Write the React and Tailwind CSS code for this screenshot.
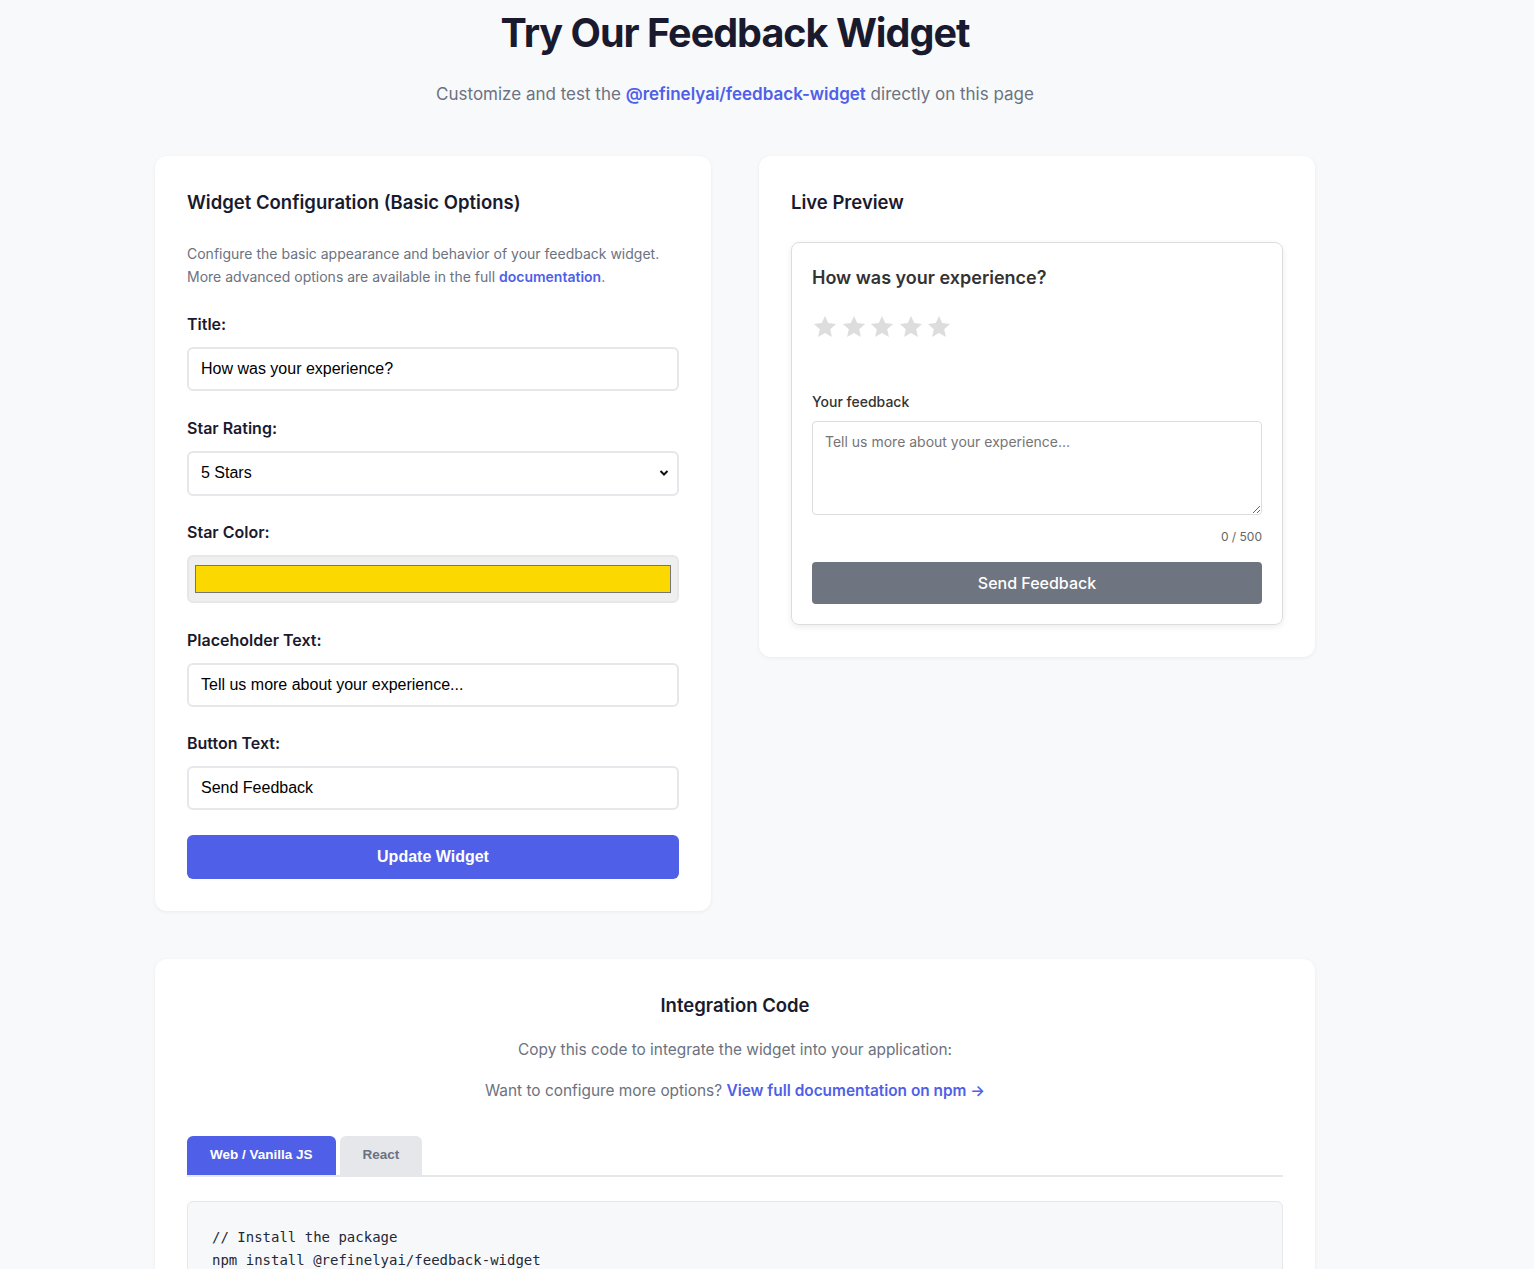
import { useState } from 'react'

const inter = { fontFamily: 'Inter, "Noto Sans", sans-serif' }

function Field({ label, children }) {
  return (
    <div className="mb-[24.5px]">
      <label className="block text-base leading-6 font-semibold text-[#1a1a2e] mb-[11px]">{label}</label>
      {children}
    </div>
  )
}

const inputCls =
  "w-full h-[44px] border-2 border-[#e5e7eb] rounded-md px-3 text-base text-black bg-white outline-none font-['Liberation_Sans',Arial,sans-serif]"

const tabCls = 'h-[39px] px-[23px] rounded-t-md text-[13.5px] font-bold '

function Star() {
  return (
    <svg width="26" height="26" viewBox="0 0 24 24" className="fill-[#dddddd]">
      <path d="M12 1.8l3 6.6 7.2.8-5.4 4.9 1.55 7.1L12 17.5l-6.35 3.7 1.55-7.1-5.4-4.9 7.2-.8z" />
    </svg>
  )
}

export default function App() {
  const [form, setForm] = useState({
    title: 'How was your experience?',
    stars: '5 Stars',
    placeholder: 'Tell us more about your experience...',
    button: 'Send Feedback',
  })
  const [tab, setTab] = useState('web')
  const [text, setText] = useState('')

  return (
    <div className="min-h-screen bg-[#f8f9fb]" style={inter}>
      <div className="w-[1470px] pb-16">
        <div className="max-w-[1160px] mx-auto">
          <header className="text-center pt-[13px]">
            <h1 className="text-[39.5px] leading-10 font-bold tracking-tight text-[#1a1a2e]">Try Our Feedback Widget</h1>
            <p className="mt-[27px] text-[17px] leading-7 text-[#6b7280]">
              Customize and test the{' '}
              <a href="#" className="font-semibold text-[#4f5fe8]">@refinelyai/feedback-widget</a>{' '}
              directly on this page
            </p>
          </header>

          <div className="mt-[48px] grid grid-cols-2 gap-12 items-start">
            <section className="bg-white rounded-xl shadow-[0_1px_4px_rgba(0,0,0,0.06)] p-8">
              <h2 className="text-[18.5px] leading-7 font-semibold text-[#1a1a2e] mb-[26px]">Widget Configuration (Basic Options)</h2>
              <p className="text-sm leading-[23px] text-[#6b7280] mb-6">
                Configure the basic appearance and behavior of your feedback widget.
                <br />
                More advanced options are available in the full{' '}
                <a href="#" className="font-semibold text-[#4f5fe8]">documentation</a>.
              </p>
              <Field label="Title:">
                <input className={inputCls} value={form.title} onChange={e => setForm(f => ({ ...f, title: e.target.value }))} />
              </Field>
              <Field label="Star Rating:">
                <div className="relative">
                  <select
                    className={inputCls + ' appearance-none h-[45px]'}
                    value={form.stars}
                    onChange={e => setForm(f => ({ ...f, stars: e.target.value }))}
                  >
                    <option>3 Stars</option>
                    <option>4 Stars</option>
                    <option>5 Stars</option>
                  </select>
                  <svg className="absolute right-[10px] top-[18px] pointer-events-none" width="10" height="8" viewBox="0 0 10 8">
                    <path d="M1.5 2l3.5 3.5L8.5 2" fill="none" stroke="#111" strokeWidth="2" />
                  </svg>
                </div>
              </Field>
              <Field label="Star Color:">
                <div className="h-12 border-2 border-[#e5e7eb] rounded-md bg-[#efefef] px-[6px] py-2">
                  <div className="h-full bg-[#fbd900] border border-[#767676]" />
                </div>
              </Field>
              <Field label="Placeholder Text:">
                <input className={inputCls} value={form.placeholder} onChange={e => setForm(f => ({ ...f, placeholder: e.target.value }))} />
              </Field>
              <Field label="Button Text:">
                <input className={inputCls} value={form.button} onChange={e => setForm(f => ({ ...f, button: e.target.value }))} />
              </Field>
              <button className="w-full h-11 rounded-md bg-[#4f5fe8] text-white text-base font-bold font-['Liberation_Sans',Arial,sans-serif]">
                Update Widget
              </button>
            </section>

            <section className="bg-white rounded-xl shadow-[0_1px_4px_rgba(0,0,0,0.06)] p-8">
              <h2 className="text-[18.5px] leading-7 font-semibold text-[#1a1a2e] mb-[26px]">Live Preview</h2>
              <div className="border border-[#dddddd] rounded-lg shadow-[0_2px_6px_rgba(0,0,0,0.08)] p-5">
                <h3 className="text-lg leading-[30px] font-semibold text-[#333333]">{form.title}</h3>
                <div className="flex gap-[2.5px] mt-[21px] mb-[52px]">
                  {[0, 1, 2, 3, 4].map(i => <Star key={i} />)}
                </div>
                <label className="block text-sm leading-5 font-medium text-[#333333] mb-[9px]">Your feedback</label>
                <textarea
                  className="w-full h-[94px] border border-[#dddddd] rounded px-3 py-[10px] text-sm leading-5 outline-none placeholder:text-[#757575] block"
                  placeholder={form.placeholder}
                  value={text}
                  onChange={e => setText(e.target.value.slice(0, 500))}
                />
                <div className="text-right text-xs leading-4 text-[#666666] mt-[14px]">{text.length} / 500</div>
                <button className="mt-[17px] w-full h-[42px] rounded bg-[#6f7580] text-white text-base font-medium">
                  {form.button}
                </button>
              </div>
            </section>
          </div>

          <section className="mt-12 bg-white rounded-xl shadow-[0_1px_4px_rgba(0,0,0,0.06)] px-8 pt-8 pb-8">
            <h2 className="text-center text-[18.5px] leading-7 font-semibold text-[#1a1a2e]">Integration Code</h2>
            <p className="text-center text-[15.4px] leading-6 text-[#6b7280] mt-[19px]">Copy this code to integrate the widget into your application:</p>
            <p className="text-center text-[15.4px] leading-6 text-[#6b7280] mt-[17px]">
              Want to configure more options?{' '}
              <a href="#" className="font-semibold text-[#4f5fe8]">View full documentation on npm →</a>
            </p>
            <div className="mt-[33px] flex gap-1 border-b-2 border-[#e5e7eb] font-['Liberation_Sans',Arial,sans-serif]">
              <button
                onClick={() => setTab('web')}
                className={tab === 'web' ? tabCls + 'bg-[#4f5fe8] text-white' : tabCls + 'bg-[#e5e7eb] text-[#6b7280]'}
              >
                Web / Vanilla JS
              </button>
              <button
                onClick={() => setTab('react')}
                className={tab === 'react' ? tabCls + 'bg-[#4f5fe8] text-white' : tabCls + 'bg-[#e5e7eb] text-[#6b7280]'}
              >
                React
              </button>
            </div>
            <pre className="mt-6 bg-[#f7f8fa] border border-[#e5e7eb] rounded-md px-6 pt-6 pb-6 text-sm leading-[23px] text-[#1f2937] font-['DejaVu_Sans_Mono',monospace] overflow-x-auto">
{tab === 'web'
  ? `// Install the package
npm install @refinelyai/feedback-widget

// Import and initialize
import { FeedbackWidget } from '@refinelyai/feedback-widget';

const widget = new FeedbackWidget({
  title: '${form.title}',
  placeholder: '${form.placeholder}',
  buttonText: '${form.button}'
});`
  : `// Install the package
npm install @refinelyai/feedback-widget

// Import the component
import { FeedbackWidget } from '@refinelyai/feedback-widget/react';`}
            </pre>
          </section>
        </div>
      </div>
    </div>
  )
}
